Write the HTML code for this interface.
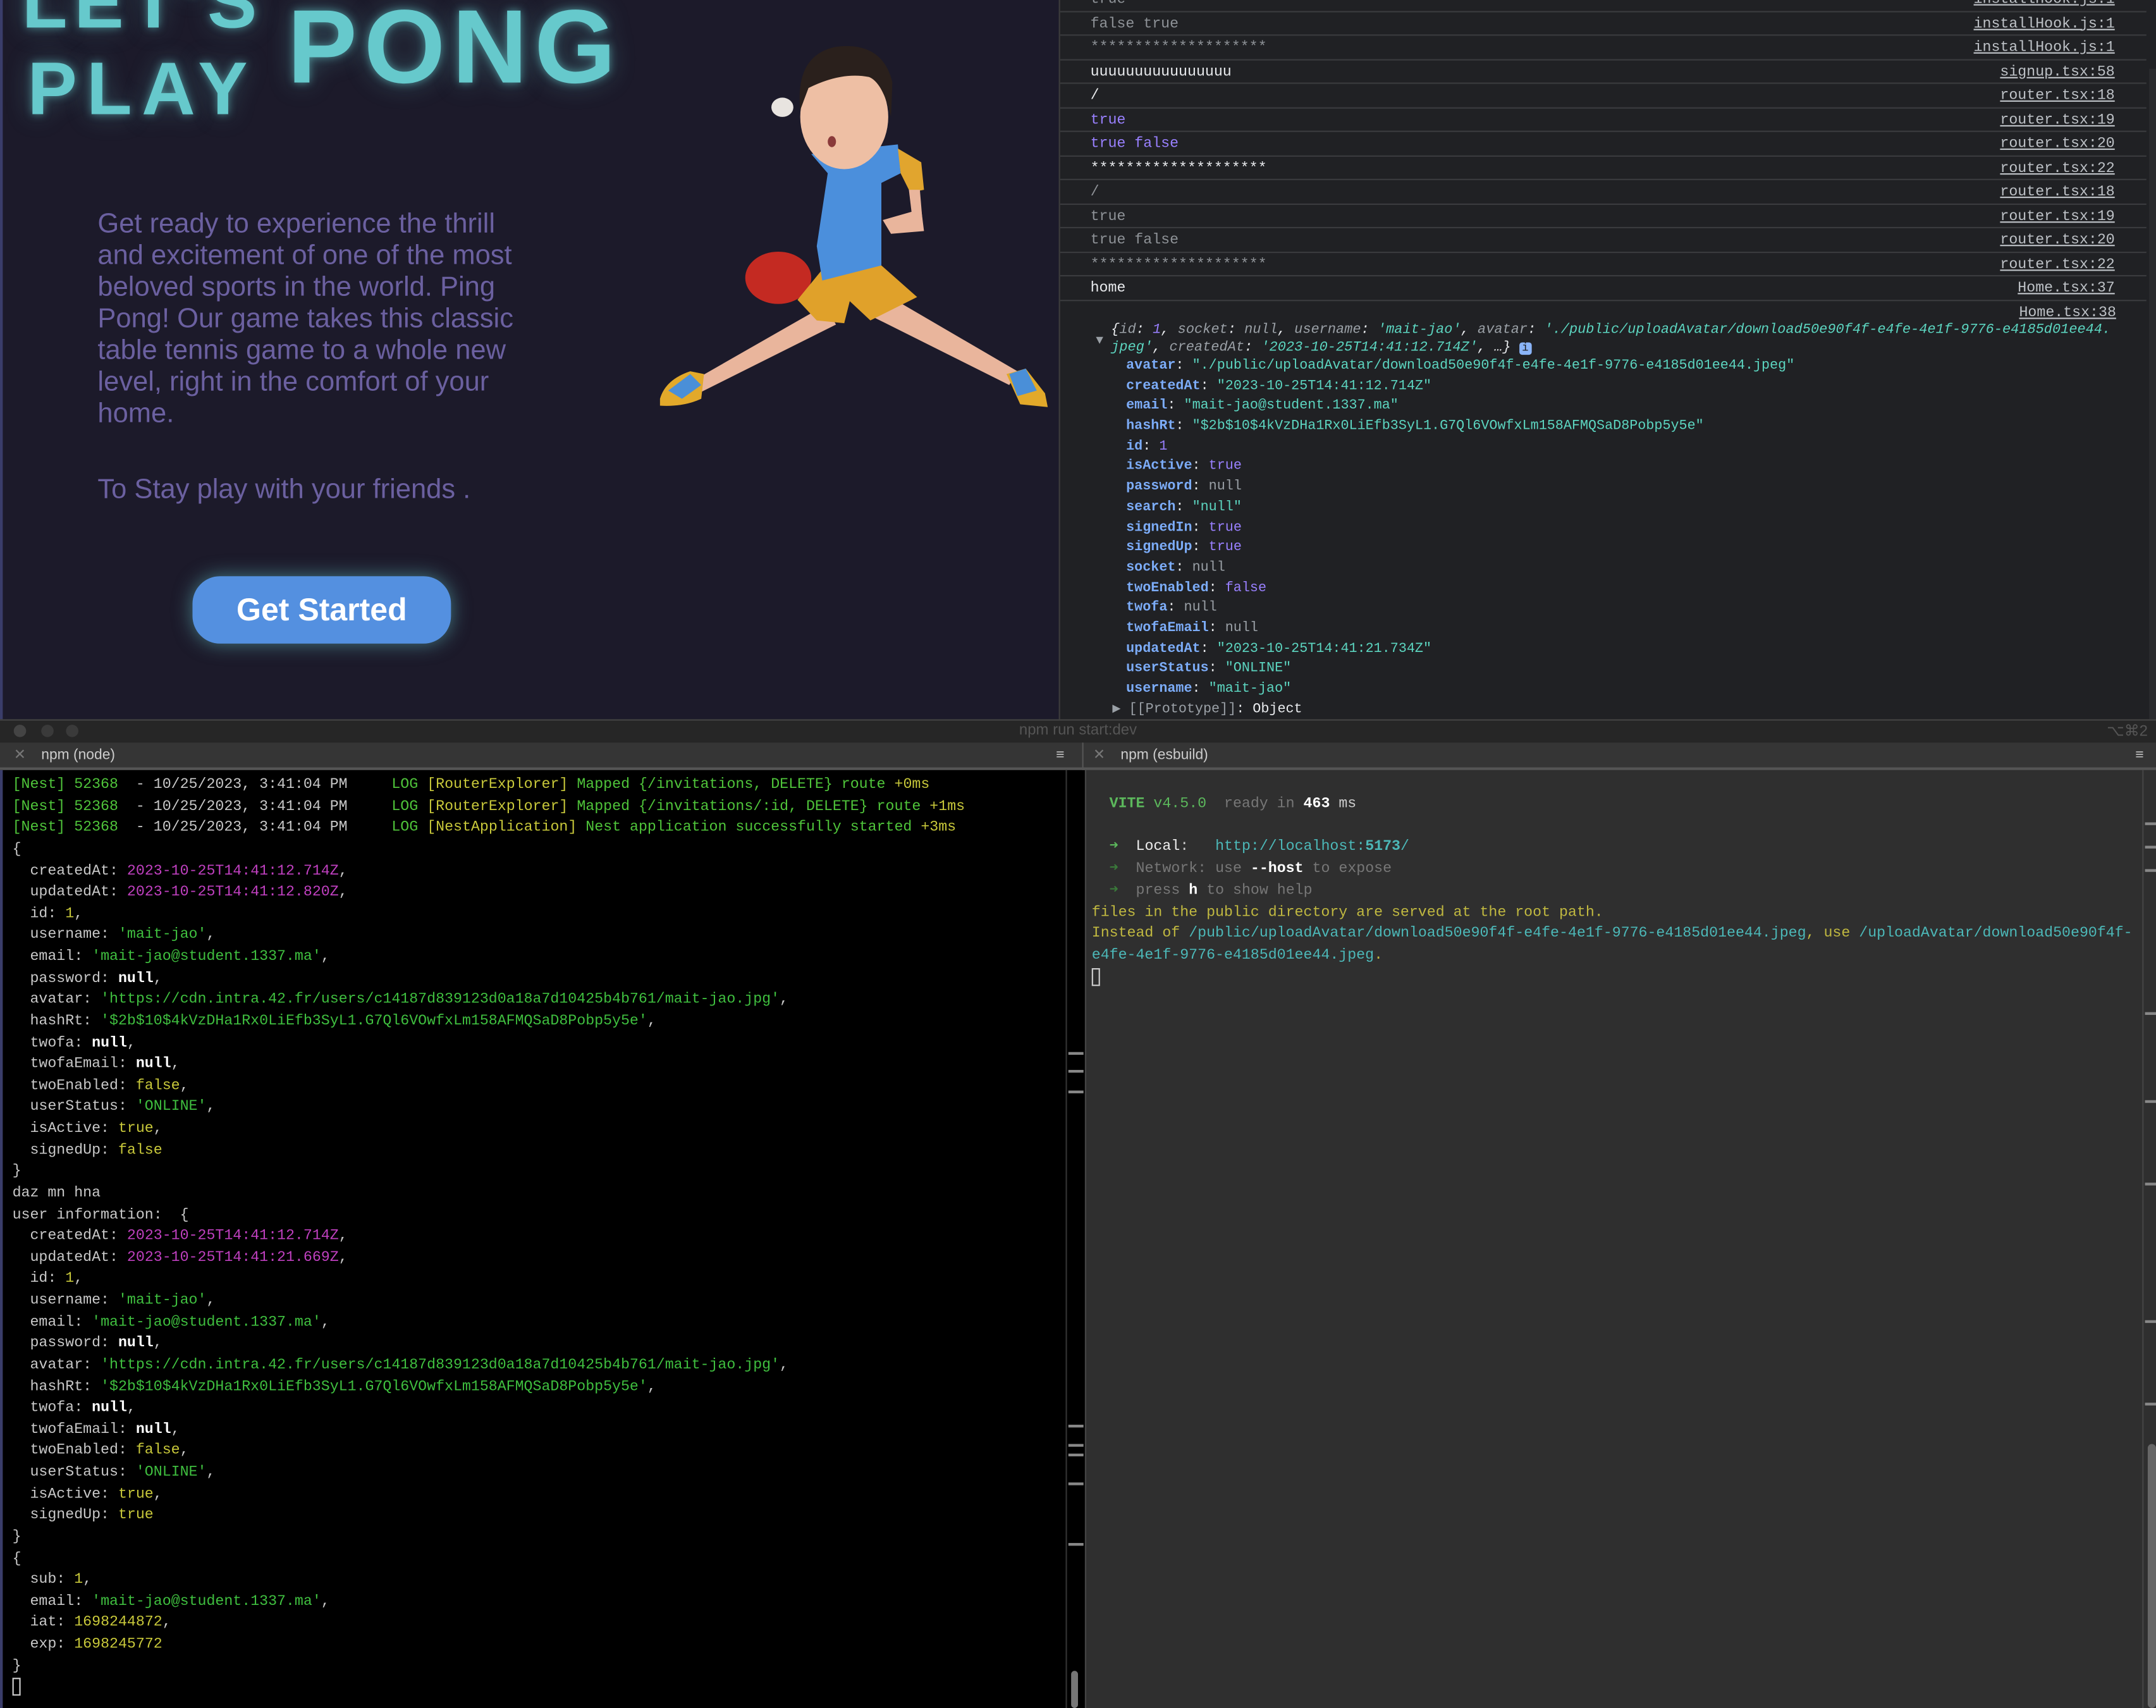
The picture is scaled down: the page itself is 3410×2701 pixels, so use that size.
<!DOCTYPE html>
<html><head><meta charset="utf-8">
<style>
html,body{margin:0;padding:0;background:#000;overflow:hidden}
#root{position:absolute;left:0;top:0;width:1568px;height:1242px;transform:scale(2.17474);transform-origin:0 0;overflow:hidden;background:#000}
.mono{font-family:"Liberation Mono","DejaVu Sans Mono",monospace;font-size:10.7px;white-space:pre}
#app{position:absolute;left:0;top:0;width:770px;height:523px;background:#1c1a2a;overflow:hidden;border-left:2px solid #3a3d6a;box-sizing:border-box}
.neon{position:absolute;font-family:"Liberation Sans",sans-serif;font-weight:700;color:#66c9cc;text-shadow:0 0 6px rgba(102,201,204,.6),0 0 18px rgba(102,201,204,.35);line-height:1}
.para{position:absolute;left:69px;font-family:"Liberation Sans",sans-serif;font-size:20px;line-height:23px;color:#6b60a0;white-space:pre}
#btn{position:absolute;left:138px;top:419px;width:188px;height:49px;border-radius:20px;background:#5490e0;box-shadow:0 0 14px rgba(102,201,204,.55);color:#fff;font-family:"Liberation Sans",sans-serif;font-weight:700;font-size:23px;text-align:center;line-height:49px}
#dev{position:absolute;left:770px;top:0;width:798px;height:523px;background:#202124;overflow:hidden;border-left:1px solid #3c3c3c}
.row{position:absolute;left:0;width:790px;height:17.6px;border-bottom:1px solid #3a3b3e;box-sizing:border-box}
.row .t{position:absolute;left:22px;top:3px}
.row .l{position:absolute;right:23px;top:3px;color:#bdc1c6;text-decoration:underline}
.dim{color:#8e9297}.wh{color:#e8eaed}.pu{color:#9980ff}
.k{color:#7cacf8;font-weight:700}.s{color:#5cd5c0}.n{color:#9aa0a6}
#title{position:absolute;left:0;top:523px;width:1568px;height:17px;background:#262626;border-top:1px solid #444}
#tabs{position:absolute;left:0;top:540px;width:1568px;height:18px;background:#353535;border-bottom:2px solid #555}
.tab{position:absolute;top:3px;font-family:"Liberation Sans",sans-serif;font-size:10.5px;color:#ccc}
#term{position:absolute;left:0;top:560px;width:787px;height:682px;background:#000;border-left:2px solid #3a3d6a;box-sizing:border-box}
#term .mono{position:absolute;left:7px;top:4px;line-height:15.62px;color:#c8c8c8}
.g{color:#4fc43a}.y{color:#c8c83a}.m{color:#c040c0}.gs{color:#3fbf3f}.b{color:#fff;font-weight:700}
#vite{position:absolute;left:789px;top:560px;width:779px;height:682px;background:#2f2f2f;border-left:1px solid #444}
#vite .mono{position:absolute;left:4px;top:18px;line-height:15.7px;color:#ccc}
.yy{color:#c0b840}.cy{color:#4cb8b8}.dd{color:#777}.vg{color:#5cb85c}
.sb{position:absolute;background:#888;height:2px}
</style></head><body>
<div id="root">
<div id="app">
  <div class="neon" style="left:14px;top:-25px;font-size:54px;letter-spacing:5px">LET'S</div>
  <div class="neon" style="left:18px;top:38px;font-size:54px;letter-spacing:7px">PLAY</div>
  <div class="neon" style="left:207px;top:-3px;font-size:76px;letter-spacing:5px">PONG</div>
  <div class="para" style="top:152px">Get ready to experience the thrill
and excitement of one of the most
beloved sports in the world. Ping
Pong! Our game takes this classic
table tennis game to a whole new
level, right in the comfort of your
home.</div>
  <div class="para" style="top:345px">To Stay play with your friends .</div>
  <div id="btn">Get Started</div>
  <svg style="position:absolute;left:0;top:0" width="770" height="523" viewBox="0 0 770 523">
    <path d="M598,222 L500,278 L506,286 L606,236 Z" fill="#e9b59c"/>
    <path d="M642,214 L738,270 L732,280 L632,230 Z" fill="#e9b59c"/>
    <path d="M478,290 Q482,276 500,270 L510,272 L508,290 Q495,296 478,295 Z" fill="#e2a92a"/>
    <path d="M484,284 L500,272 L508,280 L494,290 Z" fill="#4a8fd8"/>
    <path d="M730,272 L744,268 L758,286 L760,296 L740,294 Z" fill="#e2a92a"/>
    <path d="M732,272 L744,268 L752,284 L738,288 Z" fill="#4a8fd8"/>
    <ellipse cx="564" cy="202" rx="24" ry="19" fill="#c42a22"/>
    <path d="M578,218 L596,196 L639,193 L665,216 L631,233 L616,219 L612,235 L592,233 Z" fill="#e0a12a"/>
    <path d="M588,112 L651,105 L653,126 L639,133 L639,193 L596,204 L592,179 L600,126 Z" fill="#4b8fdc"/>
    <path d="M651,108 L668,118 L670,138 L660,140 L653,126 Z" fill="#e1a52e"/>
    <path d="M659,138 L667,138 L669,162 L662,163 Z" fill="#e9b59c"/>
    <path d="M640,160 L668,152 L670,168 L646,170 Z" fill="#e9b59c"/>
    <ellipse cx="612" cy="85" rx="32" ry="38" fill="#eebfa4"/>
    <path d="M580,80 Q576,40 606,34 Q640,30 647,60 L646,85 Q640,60 630,56 Q610,52 586,64 Z" fill="#2a201c"/>
    <ellipse cx="603" cy="103" rx="3" ry="4" fill="#8a3a3a"/>
    <ellipse cx="567" cy="78" rx="8" ry="7" fill="#e8e4e0"/>
  </svg>
</div>

<div id="dev" class="mono">
  <div class="row" style="top:-9px"><span class="t dim">true</span><span class="l">installHook.js:1</span></div>
  <div class="row" style="top:8.5px"><span class="t dim">false true</span><span class="l">installHook.js:1</span></div>
  <div class="row" style="top:26px"><span class="t dim">********************</span><span class="l">installHook.js:1</span></div>
  <div class="row" style="top:43.5px"><span class="t wh">uuuuuuuuuuuuuuuu</span><span class="l">signup.tsx:58</span></div>
  <div class="row" style="top:61px"><span class="t wh">/</span><span class="l">router.tsx:18</span></div>
  <div class="row" style="top:78.5px"><span class="t pu">true</span><span class="l">router.tsx:19</span></div>
  <div class="row" style="top:96px"><span class="t pu">true false</span><span class="l">router.tsx:20</span></div>
  <div class="row" style="top:113.5px"><span class="t wh">********************</span><span class="l">router.tsx:22</span></div>
  <div class="row" style="top:131px"><span class="t dim">/</span><span class="l">router.tsx:18</span></div>
  <div class="row" style="top:148.5px"><span class="t dim">true</span><span class="l">router.tsx:19</span></div>
  <div class="row" style="top:166px"><span class="t dim">true false</span><span class="l">router.tsx:20</span></div>
  <div class="row" style="top:183.5px"><span class="t dim">********************</span><span class="l">router.tsx:22</span></div>
  <div class="row" style="top:201px"><span class="t wh">home</span><span class="l">Home.tsx:37</span></div>
  <div style="position:absolute;right:30px;top:222px;color:#bdc1c6;text-decoration:underline">Home.tsx:38</div>
  <div style="position:absolute;left:26px;top:243px;color:#9aa0a6;font-size:9px">▼</div>
  <div style="position:absolute;left:37px;top:235px;line-height:12.5px;font-style:italic;color:#e8eaed;font-size:10.1px">{<span class="n">id</span>: <span class="pu">1</span>, <span class="n">socket</span>: <span class="n">null</span>, <span class="n">username</span>: <span class="s">'mait-jao'</span>, <span class="n">avatar</span>: <span class="s">'./public/uploadAvatar/download50e90f4f-e4fe-4e1f-9776-e4185d01ee44.</span>
<span class="s">jpeg'</span>, <span class="n">createdAt</span>: <span class="s">'2023-10-25T14:41:12.714Z'</span>, …} <span style="background:#8ab4f8;color:#202124;font-style:normal;font-size:8px;padding:0 2px;border-radius:2px">i</span></div>
  <div style="position:absolute;left:48px;top:260px;line-height:14.68px;color:#e8eaed;font-size:10px"><span class="k">avatar</span>: <span class="s">"./public/uploadAvatar/download50e90f4f-e4fe-4e1f-9776-e4185d01ee44.jpeg"</span>
<span class="k">createdAt</span>: <span class="s">"2023-10-25T14:41:12.714Z"</span>
<span class="k">email</span>: <span class="s">"mait-jao@student.1337.ma"</span>
<span class="k">hashRt</span>: <span class="s">"$2b$10$4kVzDHa1Rx0LiEfb3SyL1.G7Ql6VOwfxLm158AFMQSaD8Pobp5y5e"</span>
<span class="k">id</span>: <span class="pu">1</span>
<span class="k">isActive</span>: <span class="pu">true</span>
<span class="k">password</span>: <span class="n">null</span>
<span class="k">search</span>: <span class="s">"null"</span>
<span class="k">signedIn</span>: <span class="pu">true</span>
<span class="k">signedUp</span>: <span class="pu">true</span>
<span class="k">socket</span>: <span class="n">null</span>
<span class="k">twoEnabled</span>: <span class="pu">false</span>
<span class="k">twofa</span>: <span class="n">null</span>
<span class="k">twofaEmail</span>: <span class="n">null</span>
<span class="k">updatedAt</span>: <span class="s">"2023-10-25T14:41:21.734Z"</span>
<span class="k">userStatus</span>: <span class="s">"ONLINE"</span>
<span class="k">username</span>: <span class="s">"mait-jao"</span>
<span class="n" style="margin-left:-10px">▶ </span><span class="n">[[Prototype]]</span>: Object</div>
  <div style="position:absolute;right:0;top:50px;width:6px;height:473px;background:#2a2b2e"></div>
</div>

<div id="title">
  <div style="position:absolute;left:10px;top:3px;width:9px;height:9px;border-radius:50%;background:#444"></div>
  <div style="position:absolute;left:30px;top:3px;width:9px;height:9px;border-radius:50%;background:#3a3a3a"></div>
  <div style="position:absolute;left:48px;top:3px;width:9px;height:9px;border-radius:50%;background:#3a3a3a"></div>
  <div style="position:absolute;left:0;width:1568px;text-align:center;top:1px;font-family:'Liberation Sans',sans-serif;font-size:11px;color:#555">npm run start:dev</div>
  <div style="position:absolute;right:6px;top:1px;font-family:'Liberation Sans',sans-serif;font-size:11px;color:#555">⌥⌘2</div>
</div>
<div id="tabs">
  <div class="tab" style="left:10px;color:#777">✕</div><div class="tab" style="left:30px">npm (node)</div>
  <div class="tab" style="left:768px;color:#bbb">≡</div>
  <div style="position:absolute;left:787px;top:0;width:1px;height:18px;background:#555"></div>
  <div class="tab" style="left:795px;color:#777">✕</div><div class="tab" style="left:815px">npm (esbuild)</div>
  <div class="tab" style="left:1553px;color:#bbb">≡</div>
</div>

<div id="term"><div class="mono"><span class="g">[Nest] 52368  </span>- 10/25/2023, 3:41:04 PM <span class="g">    LOG</span> <span class="y">[RouterExplorer]</span> <span class="g">Mapped {/invitations, DELETE} route</span> <span class="y">+0ms</span>
<span class="g">[Nest] 52368  </span>- 10/25/2023, 3:41:04 PM <span class="g">    LOG</span> <span class="y">[RouterExplorer]</span> <span class="g">Mapped {/invitations/:id, DELETE} route</span> <span class="y">+1ms</span>
<span class="g">[Nest] 52368  </span>- 10/25/2023, 3:41:04 PM <span class="g">    LOG</span> <span class="y">[NestApplication]</span> <span class="g">Nest application successfully started</span> <span class="y">+3ms</span>
{
  createdAt: <span class="m">2023-10-25T14:41:12.714Z</span>,
  updatedAt: <span class="m">2023-10-25T14:41:12.820Z</span>,
  id: <span class="y">1</span>,
  username: <span class="gs">'mait-jao'</span>,
  email: <span class="gs">'mait-jao@student.1337.ma'</span>,
  password: <span class="b">null</span>,
  avatar: <span class="gs">'https://cdn.intra.42.fr/users/c14187d839123d0a18a7d10425b4b761/mait-jao.jpg'</span>,
  hashRt: <span class="gs">'$2b$10$4kVzDHa1Rx0LiEfb3SyL1.G7Ql6VOwfxLm158AFMQSaD8Pobp5y5e'</span>,
  twofa: <span class="b">null</span>,
  twofaEmail: <span class="b">null</span>,
  twoEnabled: <span class="y">false</span>,
  userStatus: <span class="gs">'ONLINE'</span>,
  isActive: <span class="y">true</span>,
  signedUp: <span class="y">false</span>
}
daz mn hna
user information:  {
  createdAt: <span class="m">2023-10-25T14:41:12.714Z</span>,
  updatedAt: <span class="m">2023-10-25T14:41:21.669Z</span>,
  id: <span class="y">1</span>,
  username: <span class="gs">'mait-jao'</span>,
  email: <span class="gs">'mait-jao@student.1337.ma'</span>,
  password: <span class="b">null</span>,
  avatar: <span class="gs">'https://cdn.intra.42.fr/users/c14187d839123d0a18a7d10425b4b761/mait-jao.jpg'</span>,
  hashRt: <span class="gs">'$2b$10$4kVzDHa1Rx0LiEfb3SyL1.G7Ql6VOwfxLm158AFMQSaD8Pobp5y5e'</span>,
  twofa: <span class="b">null</span>,
  twofaEmail: <span class="b">null</span>,
  twoEnabled: <span class="y">false</span>,
  userStatus: <span class="gs">'ONLINE'</span>,
  isActive: <span class="y">true</span>,
  signedUp: <span class="y">true</span>
}
{
  sub: <span class="y">1</span>,
  email: <span class="gs">'mait-jao@student.1337.ma'</span>,
  iat: <span class="y">1698244872</span>,
  exp: <span class="y">1698245772</span>
}
<span style="display:inline-block;width:6px;height:13px;border:1px solid #ccc;box-sizing:border-box;vertical-align:middle"></span></div>
  <div style="position:absolute;left:773px;top:0;width:1px;height:682px;background:#333"></div>
  <div class="sb" style="left:775px;top:205px;width:11px"></div><div class="sb" style="left:775px;top:218px;width:11px"></div>
  <div class="sb" style="left:775px;top:233px;width:11px"></div>
  <div class="sb" style="left:775px;top:476px;width:11px"></div><div class="sb" style="left:775px;top:490px;width:11px"></div>
  <div class="sb" style="left:775px;top:497px;width:11px"></div><div class="sb" style="left:775px;top:518px;width:11px"></div>
  <div class="sb" style="left:775px;top:562px;width:11px"></div>
  <div style="position:absolute;left:777px;top:655px;width:5px;height:27px;border-radius:3px;background:#777"></div>
</div>

<div id="vite"><div class="mono">  <span class="vg" style="font-weight:700">VITE</span> <span class="vg">v4.5.0</span>  <span class="dd">ready in</span> <span class="b">463</span> ms

  <span class="vg">➜</span>  <span style="color:#eee">Local</span>:   <span class="cy">http://localhost:<b>5173</b>/</span>
  <span style="color:#3a7a3a">➜</span>  <span class="dd">Network: use</span> <span class="b">--host</span> <span class="dd">to expose</span>
  <span style="color:#3a7a3a">➜</span>  <span class="dd">press</span> <span class="b">h</span> <span class="dd">to show help</span>
<span class="yy">files in the public directory are served at the root path.</span>
<span class="yy">Instead of </span><span class="cy">/public/uploadAvatar/download50e90f4f-e4fe-4e1f-9776-e4185d01ee44.jpeg</span><span class="yy">, use </span><span class="cy">/uploadAvatar/download50e90f4f-</span>
<span class="cy">e4fe-4e1f-9776-e4185d01ee44.jpeg</span><span class="yy">.</span>
<span style="display:inline-block;width:6px;height:13px;border:1px solid #ccc;box-sizing:border-box;vertical-align:middle"></span></div>
  <div style="position:absolute;left:768px;top:0;width:1px;height:682px;background:#444"></div>
  <div class="sb" style="left:770px;top:38px;width:9px"></div><div class="sb" style="left:770px;top:55px;width:9px"></div>
  <div class="sb" style="left:770px;top:72px;width:9px"></div><div class="sb" style="left:770px;top:176px;width:9px"></div>
  <div class="sb" style="left:770px;top:240px;width:9px"></div><div class="sb" style="left:770px;top:300px;width:9px"></div>
  <div class="sb" style="left:770px;top:400px;width:9px"></div><div class="sb" style="left:770px;top:460px;width:9px"></div>
  <div style="position:absolute;left:772px;top:490px;width:6px;height:192px;border-radius:3px;background:#666"></div>
</div>
</div>
</body></html>
